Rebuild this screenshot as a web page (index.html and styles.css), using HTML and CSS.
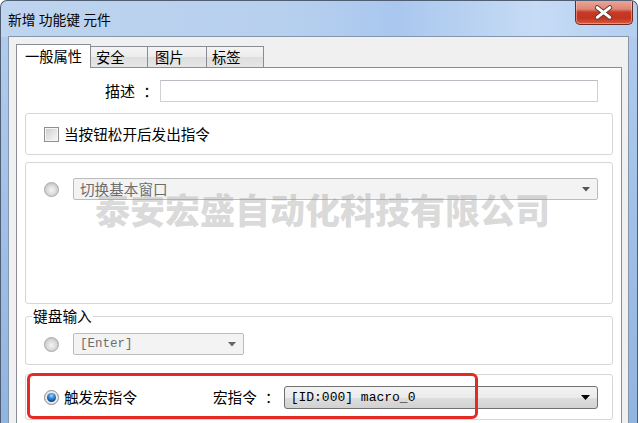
FILE: index.html
```html
<!DOCTYPE html>
<html lang="zh-CN">
<head>
<meta charset="utf-8">
<title>新增 功能键 元件</title>
<link rel="stylesheet" href="styles.css">
</head>
<body>
<div class="window">
  <div class="titlebar">
    <span class="title">新增 功能键 元件</span>
    <div class="close">
      <svg width="58" height="24" viewBox="0 0 58 24">
        <path d="M22 7.5 L35 17.5 M35 7.5 L22 17.5" stroke="#5a3a36" stroke-width="5" stroke-linecap="round" fill="none"/>
        <path d="M22 7.5 L35 17.5 M35 7.5 L22 17.5" stroke="#ffffff" stroke-width="3" stroke-linecap="round" fill="none"/>
      </svg>
    </div>
  </div>
  <div class="client">
    <div class="tabs">
      <div class="tab active">一般属性</div>
      <div class="tab w57">安全</div>
      <div class="tab w59">图片</div>
      <div class="tab w57">标签</div>
    </div>
    <div class="pane">
      <div class="desc-row">
        <span class="desc-label">描述 ：</span>
        <input class="textbox" type="text" value="">
      </div>
      <div class="group g1">
        <span class="checkbox"></span>
        <span class="label">当按钮松开后发出指令</span>
      </div>
      <div class="group g2">
        <div class="row">
          <span class="radio"></span>
          <div class="combo disabled wide"><span>切换基本窗口</span>
            <svg class="arrow" width="8" height="5" viewBox="0 0 8 5"><path d="M0 0H8L4 4.5Z" fill="#555"/></svg>
          </div>
        </div>
      </div>
      <fieldset class="group g3">
        <legend>键盘输入</legend>
        <div class="row">
          <span class="radio"></span>
          <div class="combo disabled enter"><span class="mono">[Enter]</span>
            <svg class="arrow" width="8" height="5" viewBox="0 0 8 5"><path d="M0 0H8L4 4.5Z" fill="#666"/></svg>
          </div>
        </div>
      </fieldset>
      <div class="group g4">
        <span class="radio checked"></span>
        <span class="label">触发宏指令</span>
        <span class="label macro-label">宏指令 ：</span>
        <div class="combo active-combo"><span class="mono dark">[ID:000] macro_0</span>
          <svg class="arrow" width="9" height="5" viewBox="0 0 9 5"><path d="M0 0H9L4.5 5Z" fill="#000"/></svg>
        </div>
        <div class="highlight"></div>
      </div>
    </div>
  </div>
</div>
<div class="watermark">泰安宏盛自动化科技有限公司</div>
</body>
</html>
```

FILE: styles.css
```css
* { box-sizing: border-box; }
html, body { margin: 0; padding: 0; }
body {
  width: 640px;
  height: 423px;
  overflow: hidden;
  position: relative;
  background: #ffffff;
  font-family: "Noto Sans CJK SC", "Noto Sans", sans-serif;
  font-size: 14.6px;
  color: #000;
}

.window {
  width: 638px;
  height: 440px;
  border: 1px solid #4f5e72;
  border-bottom: 0;
  border-radius: 7px 7px 0 0;
  background:
    linear-gradient(to right, #bed4ef 0%, #b7d0ee 45%, #a9c7ee 62%, #c6dbf5 84%, #b5cff0 100%) top / 100% 36px no-repeat,
    linear-gradient(#b3cdee, #90b3e0);
  display: flex;
  flex-direction: column;
  overflow: hidden;
}

.titlebar {
  height: 35px;
  display: flex;
  align-items: flex-start;
  justify-content: space-between;
  padding: 0 4px 0 7px;
}
.title {
  margin-top: 9px;
  font-size: 13.8px;
  line-height: 18px;
  color: #000;
}
.close {
  width: 58px;
  height: 25px;
  margin-top: -1px;
  border: 1px solid #6e2a20;
  border-top: 0;
  border-radius: 0 0 5px 5px;
  background: linear-gradient(#eba99b 0%, #de8676 38%, #c63b29 50%, #c2341f 75%, #d65a42 100%);
  box-shadow: inset 0 0 0 1px rgba(255, 215, 205, 0.45);
  display: flex;
}
.close svg { display: block; }

.client {
  flex: 1;
  margin: 0 8px 0 7px;
  background: #f0f0f0;
  border: 1px solid #8496ac;
  border-bottom: 0;
  padding: 7px 6px 0 7px;
  display: flex;
  flex-direction: column;
}

.tabs {
  display: flex;
  align-items: flex-end;
  height: 24px;
  margin-bottom: -1px;
  position: relative;
  z-index: 1;
}
.tab {
  height: 21px;
  margin-bottom: 1px;
  border: 1px solid #898c95;
  border-left: 0;
  border-bottom: 0;
  background: linear-gradient(#f4f4f4 0%, #ececec 50%, #dedede 51%, #e6e6e6 100%);
  line-height: 20px;
  padding-left: 5px;
  font-size: 14.3px;
}
.tab.w57 { width: 57px; }
.tab.w59 { width: 59px; padding-left: 7px; }
.tab.active {
  width: 75px;
  height: 24px;
  margin-bottom: 0;
  border-left: 1px solid #898c95;
  background: #fff;
  text-align: center;
  padding-left: 0;
  line-height: 22px;
  font-size: 14.3px;
}

.pane {
  flex: 1;
  background: #fff;
  border: 1px solid #898c95;
  border-bottom: 0;
  padding: 12px 8px 0 8px;
  display: flex;
  flex-direction: column;
}

.desc-row {
  display: flex;
  align-items: center;
  height: 22px;
  padding-left: 80px;
}
.desc-label {
  width: 55px;
  line-height: 22px;
  font-size: 15px;
  white-space: pre;
  word-spacing: 5px;
}
.textbox {
  width: 438px;
  height: 22px;
  margin: 0;
  border: 1px solid #cfd1d6;
  border-top-color: #b9bcc2;
  background: #fff;
  padding: 0 4px;
  font: inherit;
  outline: none;
}

.group {
  border: 1px solid #d7d7d7;
  border-radius: 3px;
  background: #fff;
}
.g1 {
  margin-top: 11px;
  height: 42px;
  display: flex;
  align-items: center;
  padding-left: 18px;
}
.g2 {
  margin-top: 7px;
  height: 142px;
  padding: 15px 14px 0 18px;
}
.g3 {
  margin: 4px 0 0 0;
  padding: 0 14px 9px 6px;
  min-width: 0;
}
.g3 legend {
  padding: 0 1px;
  font-size: 14.7px;
  line-height: 16px;
}
.g3 .row { margin-top: 9px; margin-left: 12px; }
.g4 {
  margin-top: 9px;
  height: 46px;
  display: flex;
  align-items: center;
  padding: 0 14px 0 18px;
  position: relative;
}

.row {
  display: flex;
  align-items: center;
  gap: 14px;
}

.label { margin-left: 5px; line-height: 20px; white-space: pre; }
.macro-label { margin-left: 76px; margin-right: 4px; word-spacing: 5px; }

.checkbox {
  width: 15px;
  height: 15px;
  border: 1px solid #8e8f8f;
  background: linear-gradient(135deg, #cbcbcb 0%, #e6e6e6 55%, #f7f7f7 100%);
  box-shadow: inset 0 0 0 1px #f6f6f6;
  flex: none;
}

.radio {
  width: 15px;
  height: 15px;
  border-radius: 50%;
  border: 1px solid #a8a8a8;
  background: radial-gradient(circle at 50% 55%, #f4f4f4 0%, #dcdcdc 45%, #c9c9c9 70%, #eeeeee 100%);
  flex: none;
  position: relative;
}
.radio.checked {
  border-color: #8a8a8a;
  background: radial-gradient(circle, #f8f8f8 0%, #e8e8e8 70%, #d0d0d0 100%);
}
.radio.checked::after {
  content: "";
  position: absolute;
  left: 2px;
  top: 2px;
  width: 9px;
  height: 9px;
  border-radius: 50%;
  background: radial-gradient(circle at 50% 30%, #a8d8ff 0%, #3a8ad8 35%, #0f4d92 70%, #07284f 100%);
}

.combo {
  height: 22px;
  display: flex;
  align-items: center;
  padding: 0 7px 0 6px;
  border-radius: 2px;
}
.combo.disabled {
  border: 1px solid #bcbcbc;
  background: #f3f3f3;
  color: #6d6d6d;
}
.combo.wide { flex: 1; }
.combo.wide span { line-height: 20px; }
.combo.enter { width: 171px; }
.combo.active-combo {
  flex: 1;
  height: 23px;
  border: 1px solid #707070;
  border-radius: 3px;
  background: linear-gradient(#f3f3f3 0%, #ebebeb 50%, #dddddd 51%, #d2d2d2 100%);
}
.combo .arrow { margin-left: auto; display: block; }

.mono {
  font-family: "Liberation Mono", "DejaVu Sans Mono", monospace;
  font-size: 12.5px;
  color: #6d6d6d;
}
.mono.dark { color: #000; font-size: 13px; }

.highlight {
  position: absolute;
  left: 1px;
  top: -2px;
  width: 451px;
  height: 46px;
  border: 3px solid #e52a24;
  border-radius: 6px;
  pointer-events: none;
}

.watermark {
  position: absolute;
  left: 95px;
  top: 191px;
  font-size: 35px;
  line-height: 36px;
  font-weight: 900;
  color: rgba(150, 150, 150, 0.36);
  white-space: nowrap;
  pointer-events: none;
}
```
